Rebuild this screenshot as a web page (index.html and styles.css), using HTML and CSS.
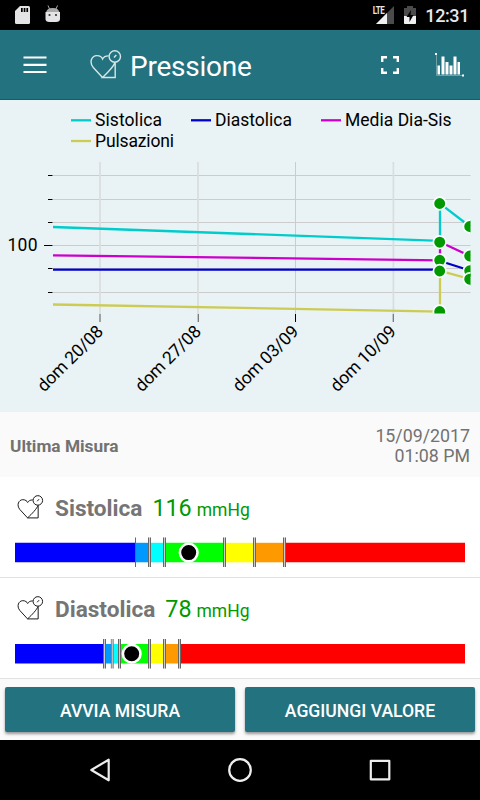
FILE: index.html
```html
<!DOCTYPE html>
<html lang="it">
<head>
<meta charset="utf-8">
<title>Pressione</title>
<link rel="stylesheet" href="styles.css">
</head>
<body>
<svg class="defs" width="0" height="0" aria-hidden="true">
  <symbol id="heart" viewBox="0 0 32 30">
    <path d="M12.5 27.5 L3.3 17.5 C-1.2 12 1.8 5.8 6.7 5.6 C9.8 5.5 12 7.4 12.6 9 C13.4 7.4 15.3 5.8 18.7 5.9 M25 12.5 C23.6 16.5 17.8 22.5 12.5 27.5 H25.2 V12.5"/>
    <circle cx="24.8" cy="6.5" r="5.7"/>
    <path d="M24 7.5 L26.3 5"/>
  </symbol>
</svg>
<div class="screen">
  <header class="status">
    <svg class="status-left" width="50" height="22" viewBox="0 0 50 22">
      <path fill="#e4e4e4" d="M5 1H13.5Q15 1 15 2.500V17.500Q15 19 13.500 19H1.500Q0 19 0 17.500V6Z"/>
      <path fill="#000" d="M6 3h1.700v4H6zM8.700 3h1.700v4H8.700zM11.400 3h1.700v4H11.400z"/>
      <path stroke="#aaa" fill="none" d="M33 0.500L34.500 4M42.500 0.500L41 4"/>
      <path fill="#aaa" d="M31 8Q31.500 3 37.700 3Q44 3 44.500 8Z"/>
      <path fill="#e4e4e4" d="M30.500 7H45V14Q45 17 41 17H34.500Q30.500 17 30.500 14Z"/>
      <circle cx="34.500" cy="10" r="1.100" fill="#333"/><circle cx="41" cy="10" r="1.100" fill="#333"/>
    </svg>
    <div class="status-right">
      <span class="lte">LTE</span>
      <svg class="signal" width="18" height="18" viewBox="0 0 18 18"><path fill="#4b4b4b" d="M18 0V18H0Z"/><path fill="#f0f0f0" d="M11 7V18H0Z"/></svg>
      <svg width="12" height="18" viewBox="0 0 12 18"><path fill="#4b4b4b" d="M3 0H9V2H12V18H0V2H3Z"/><path fill="#f0f0f0" d="M0 10H12V17Q12 18 11 18H1Q0 18 0 17Z"/><path d="M7 4L2.500 11H5.500V16L9.500 9H6.500Z"/></svg>
      <span class="clock">12:31</span>
    </div>
  </header>
  <div class="appbar">
    <svg class="menu" width="24" height="18" viewBox="0 0 24 18"><path d="M0.500 1.500H23.500M0.500 8.800H23.500M0.500 16H23.500"/></svg>
    <svg class="heart heart-light" width="32" height="30"><use href="#heart"/></svg>
    <h1 class="title">Pressione</h1>
    <svg class="full" width="18" height="18" viewBox="0 0 18 18"><path d="M1.200 6V1.200H6M12 1.200H16.800V6M16.800 12V16.800H12M6 16.800H1.200V12"/></svg>
    <svg class="bars" width="30" height="24" viewBox="0 0 30 24"><path fill="none" stroke="#719fa7" d="M1.500 2V22.500H28"/><path fill="#fff" d="M0 0h2v2H0zM27 21.500h2v2h-2zM2.500 12.500h2.500V21.500H2.500zM6.500 3.500h3V21.500h-3zM10.500 9h3V21.500h-3zM14.500 12.500h3V21.500h-3zM18.500 3.500h3V21.500h-3zM22.500 9h2.500V21.500h-2.500z"/></svg>
  </div>
  <svg class="chart" width="480" height="312" viewBox="0 100 480 312">
    <defs><clipPath id="plot"><rect x="53" y="160" width="417.500" height="153.500"/></clipPath></defs>
    <g class="series">
      <path class="sis" d="M71 120.300H91"/><path class="dia" d="M191 120.300H211"/><path class="med" d="M321 120.300H341"/><path class="pul" d="M71 141H91"/>
    </g>
    <g class="labels">
      <text x="95" y="126.300" textLength="67">Sistolica</text>
      <text x="215" y="126.300" textLength="77">Diastolica</text>
      <text x="345" y="126.300" textLength="106.500">Media Dia-Sis</text>
      <text x="95" y="147" textLength="79">Pulsazioni</text>
      <text x="7.500" y="251.300" textLength="30">100</text>
      <text class="date" transform="translate(104.300 332.600) rotate(-45)" textLength="85">dom 20/08</text>
      <text class="date" transform="translate(202.100 332.600) rotate(-45)" textLength="85">dom 27/08</text>
      <text class="date" transform="translate(299.600 332.600) rotate(-45)" textLength="85">dom 03/09</text>
      <text class="date" transform="translate(397.300 332.600) rotate(-45)" textLength="85">dom 10/09</text>
    </g>
    <path class="grid" d="M53 175.500H470.500M53 199.500H470.500M53 222.500H470.500M53 245.500H470.500M53 268.500H470.500M53 292.500H470.500M295.500 162V314"/>
    <path class="grid soft" d="M100 162V314M198 162V314M393.400 162V314"/>
    <path class="tick" d="M48 175.500H52.500M48 199.500H52.500M48 222.500H52.500M44 245.500H52.500M48 268.500H52.500M48 292.500H52.500M295.500 314V322"/>
    <path class="tick soft-tick" d="M100 314V322M198.300 314V322M393.300 314V322"/>
    <g clip-path="url(#plot)">
      <g class="series">
        <path class="sis" d="M53 227L440 240.800V203.500L470 226.500"/>
        <path class="med" d="M53 255.300L440 260.300V242L470 256"/>
        <path class="dia" d="M53 269.700H440V261L470 270.500"/>
        <path class="pul" d="M53 304.500L440 311.600V270.800L470 279"/>
      </g>
      <g class="dots">
        <circle cx="439.700" cy="203.500" r="6.300"/><circle cx="469.700" cy="226.500" r="6.300"/>
        <circle cx="439.700" cy="242.200" r="6.300"/><circle cx="469.700" cy="256" r="6.300"/>
        <circle cx="439.700" cy="260.300" r="6.300"/><circle cx="469.700" cy="270.800" r="6.300"/>
        <circle cx="439.700" cy="311.500" r="6.300"/><circle cx="439.700" cy="271" r="6.300"/><circle cx="469.700" cy="279.200" r="6.300"/>
      </g>
    </g>
  </svg>
  <section class="last">
    <strong>Ultima Misura</strong>
    <div class="when">15/09/2017<br>01:08 PM</div>
  </section>
  <section class="measure">
    <div class="reading">
      <svg class="heart" width="27" height="25"><use href="#heart"/></svg>
      <h2 class="name sis-name">Sistolica</h2><span class="value">116</span><span class="unit">mmHg</span>
    </div>
    <svg class="gauge" width="480" height="30" viewBox="0 0 480 30">
      <g transform="translate(0 5.800)"><path fill="#00f" d="M15 0H136V19.500H15z"/><path fill="#0099ff" d="M136 0h14v19.500h-14z"/><path fill="#0ff" d="M150 0h15v19.500h-15z"/><path fill="#0f0" d="M165 0h60v19.500h-60z"/><path fill="#ff0" d="M225 0h30v19.500h-30z"/><path fill="#f90" d="M255 0h30v19.500h-30z"/><path fill="#f00" d="M285 0h180v19.500H285z"/></g>
      <path class="gap" d="M149.500 0.500V30M164.500 0.500V30M224.500 0.500V30M254.500 0.500V30M284.500 0.500V30"/>
      <path class="edge" d="M135.500 0.500V30M148.500 0.500V30M150.500 0.500V30M163.500 0.500V30M165.500 0.500V30M223.500 0.500V30M225.500 0.500V30M253.500 0.500V30M255.500 0.500V30M283.500 0.500V30M285.500 0.500V30"/>
      <circle class="knob" cx="188.700" cy="15.600" r="8.800"/>
    </svg>
  </section>
  <section class="measure second">
    <div class="reading">
      <svg class="heart" width="27" height="25"><use href="#heart"/></svg>
      <h2 class="name dia-name">Diastolica</h2><span class="value">78</span><span class="unit">mmHg</span>
    </div>
    <svg class="gauge" width="480" height="31" viewBox="0 0 480 31">
      <g transform="translate(0 6)"><path fill="#00f" d="M15 0H105V19.500H15z"/><path fill="#0099ff" d="M105 0h7.500v19.500H105z"/><path fill="#0ff" d="M112.500 0h7.500v19.500h-7.500z"/><path fill="#0f0" d="M120 0h30v19.500h-30z"/><path fill="#ff0" d="M150 0h15v19.500h-15z"/><path fill="#f90" d="M165 0h15v19.500h-15z"/><path fill="#f00" d="M180 0h285v19.500H180z"/></g>
      <path class="gap" d="M104.500 1V30.500M112.300 1V30.500M119.500 1V30.500M149.500 1V30.500M164.500 1V30.500M179.500 1V30.500"/>
      <path class="edge" d="M103.500 1V30.500M105.500 1V30.500M118.500 1V30.500M120.500 1V30.500M148.500 1V30.500M150.500 1V30.500M163.500 1V30.500M165.500 1V30.500M178.500 1V30.500M180.500 1V30.500"/>
      <path class="edge soft-edge" d="M111.300 1V30.500M113.300 1V30.500"/>
      <circle class="knob" cx="131.700" cy="15.700" r="8.800"/>
    </svg>
  </section>
  <div class="actions">
    <button class="start">AVVIA MISURA</button>
    <button class="add">AGGIUNGI VALORE</button>
  </div>
  <nav class="nav">
    <svg width="480" height="60" viewBox="0 0 480 60"><path d="M108.700 19.700V40.300L91.300 30Z"/><circle cx="240" cy="30" r="10.800"/><rect x="370.800" y="20.800" width="18.500" height="18.500"/></svg>
  </nav>
</div>
</body>
</html>
```
FILE: styles.css
```css
* { box-sizing: border-box; }
body { margin: 0; font-family: Roboto, "Liberation Sans", sans-serif; background: #fafafa; }
svg { display: block; flex: none; }
.defs { position: absolute; }
.screen { width: 480px; height: 800px; display: flex; flex-direction: column; overflow: hidden; }
.status { height: 30px; flex: none; background: #000; color: #e8e8e8; display: flex; justify-content: space-between; padding: 5px 11px 0 15px; }
.status-right { display: flex; padding-top: 1px; }
.lte { font-size: 10px; line-height: 10px; font-weight: 700; letter-spacing: -0.6px; transform: scaleX(0.8); transform-origin: right; }
.signal { margin: 0 10px 0 -8px; }
.clock { font-size: 18px; line-height: 20px; font-weight: 500; margin-left: 9px; letter-spacing: -0.4px; }
.appbar { height: 70px; flex: none; display: flex; align-items: flex-start; background: #23727f; border-bottom: 1px solid #09606f; padding-left: 23px; color: #fff; }
.menu { margin-top: 26px; fill: none; stroke: #fff; stroke-width: 2.2; }
.heart { fill: none; stroke: #111; stroke-width: 1.15; }
.heart-light { stroke: #d8e6e8; stroke-width: 1.4; margin: 20px 0 0 43px; }
.title { margin: 20px 0 0 8px; width: 251px; font-size: 28px; line-height: 33px; font-weight: 400; letter-spacing: -0.25px; }
.full { margin-top: 26px; fill: none; stroke: #fff; stroke-width: 2.4; }
.bars { margin: 23px 0 0 36px; }
.chart { background: #e9f2f4; }
.labels { font-size: 17.5px; fill: #000; }
.date { text-anchor: end; }
.grid { fill: none; stroke: #ccc; }
.soft { stroke: #dadddd; stroke-width: 1.7; }
.tick { fill: none; stroke: #000; }
.soft-tick { stroke: #777; stroke-width: 1.3; }
.series { fill: none; stroke-width: 2.3; }
.sis { stroke: #00cccc; }
.dia { stroke: #0000cc; }
.med { stroke: #cc00cc; }
.pul { stroke: #cccc55; }
.dots { fill: #090; stroke: #f8ffff; stroke-width: 1.7; }
.last { height: 65px; flex: none; background: #fafafa; color: #727272; display: flex; justify-content: space-between; align-items: center; padding: 3px 10px 0; font-size: 17.8px; line-height: 20.5px; }
.last strong { font-size: 17.3px; }
.when { text-align: right; }
.measure { height: 101px; flex: none; background: #fff; border-bottom: 1px solid #e2e2e2; padding-top: 17px; }
.reading { height: 43px; display: flex; align-items: baseline; padding-left: 17px; }
.reading .heart { align-self: flex-start; margin: 1px 11px 0 0; }
.name { margin: 0; font-size: 22.6px; line-height: 28px; color: #757575; font-weight: 700; }
.value { margin-left: 10px; font-size: 23.3px; color: #090; }
.unit { margin-left: 5px; font-size: 17.5px; color: #090; }
.actions { height: 61px; flex: none; display: flex; gap: 10px; padding: 8px 5px; background: #fafafa; }
.actions button { flex: 1; border: 0; border-radius: 2px; background: #23727f; color: #fff; font: 500 17.6px Roboto, sans-serif; box-shadow: 0 2px 3px rgba(0,0,0,.4); padding: 2px 0 0; }
.nav { height: 60px; flex: none; background: #000; fill: none; }
.nav svg { stroke: #eee; stroke-width: 2.2; stroke-linejoin: round; }
.soft-edge { opacity: .7; }
.gap { stroke: #ccc; stroke-width: 2; }
.edge { stroke: #666; stroke-width: 1; }
.knob { fill: #000; stroke: #fff; stroke-width: 2.6; }
```
